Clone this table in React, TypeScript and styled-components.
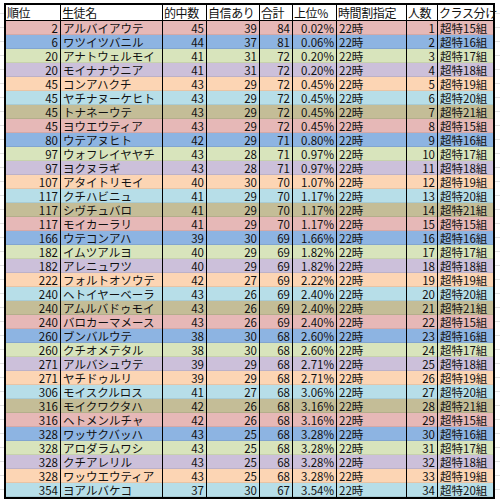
import React from 'react';
import styled, { createGlobalStyle } from 'styled-components';

const GlobalStyle = createGlobalStyle`
  html, body {
    margin: 0;
    padding: 0;
    background-color: #ffffff;
    background-image: repeating-linear-gradient(
      to bottom,
      transparent 0,
      transparent 13px,
      #e2e2e2 13px,
      #e2e2e2 14px
    );
  }
  * { box-sizing: border-box; }
`;

const CLASS_COLORS: Record<string, string> = {
  '15': '#e6b8b7',
  '16': '#8db4e2',
  '17': '#d8e4bc',
  '18': '#ccc0da',
  '19': '#fcd5b4',
  '20': '#b7dee8',
  '21': '#c4bd97',
};

const COLUMNS = '55px 102px 44px 53px 33px 44px 70px 31px 55px';

const Sheet = styled.div`
  padding: 3px 0 0 4px;
  width: 500px;
  height: 500px;
  overflow: hidden;
`;

const Table = styled.div`
  width: 491px;
  border: 2px solid #000;
  background: #fff;
  font-family: 'Noto Sans CJK JP', 'Noto Sans', sans-serif;
  font-size: 11.5px;
  color: #111;
`;

const HeaderRow = styled.div`
  display: grid;
  grid-template-columns: ${COLUMNS};
  height: 16px;
  border-bottom: 1px solid #000;
  background: #fff;
`;

const Row = styled.div<{ $bg: string }>`
  display: grid;
  grid-template-columns: ${COLUMNS};
  height: 14px;
  background: ${(p) => p.$bg};
  box-shadow: inset 0 -1px 0 rgba(0, 0, 0, 0.08);
`;

const Cell = styled.div<{ $align?: 'left' | 'right' }>`
  line-height: 14px;
  padding: 0 2px;
  text-align: ${(p) => p.$align ?? 'left'};
  white-space: nowrap;
  border-right: 1px solid #000;
  &:last-child {
    border-right: none;
  }
`;

const HeadCell = styled(Cell)`
  line-height: 15px;
  font-size: 12px;
  letter-spacing: -0.4px;
  padding-left: 1px;
`;

type Entry = [number, string, number, number, string, string];

const rows: Entry[] = [
  [2, 'アルバイアウテ', 45, 39, '0.02%', '15'],
  [6, 'ワツイツバニル', 44, 37, '0.06%', '16'],
  [20, 'アナトウェルモイ', 41, 31, '0.20%', '17'],
  [20, 'モイナナウニア', 41, 31, '0.20%', '18'],
  [45, 'コンアハクチ', 43, 29, '0.45%', '19'],
  [45, 'ヤチナヌーケヒト', 43, 29, '0.45%', '20'],
  [45, 'トナネーウテ', 43, 29, '0.45%', '21'],
  [45, 'ヨウエウティア', 43, 29, '0.45%', '15'],
  [80, 'ウテアヌヒト', 42, 29, '0.80%', '16'],
  [97, 'ウォフレイヤヤチ', 43, 28, '0.97%', '17'],
  [97, 'ヨクヌラギ', 43, 28, '0.97%', '18'],
  [107, 'アタイトリモイ', 40, 30, '1.07%', '19'],
  [117, 'クチハビニュ', 41, 29, '1.17%', '20'],
  [117, 'シヴチュバロ', 41, 29, '1.17%', '21'],
  [117, 'モイカーラリ', 41, 29, '1.17%', '15'],
  [166, 'ウテコンアハ', 39, 30, '1.66%', '16'],
  [182, 'イムツアルヨ', 40, 29, '1.82%', '17'],
  [182, 'アレニュワツ', 40, 29, '1.82%', '18'],
  [222, 'フォルトオソウテ', 42, 27, '2.22%', '19'],
  [240, 'ヘトイヤーベーラ', 43, 26, '2.40%', '20'],
  [240, 'アムルバドゥモイ', 43, 26, '2.40%', '21'],
  [240, 'バロカーマメース', 43, 26, '2.40%', '15'],
  [260, 'ブンバルウテ', 38, 30, '2.60%', '16'],
  [260, 'クチオメテタル', 38, 30, '2.60%', '17'],
  [271, 'アルバシュウテ', 39, 29, '2.71%', '18'],
  [271, 'ヤチドゥルリ', 39, 29, '2.71%', '19'],
  [306, 'モイスクルロス', 41, 27, '3.06%', '20'],
  [316, 'モイクワクタハ', 42, 26, '3.16%', '21'],
  [316, 'ヘトメンルチャ', 42, 26, '3.16%', '15'],
  [328, 'ワッサクバッハ', 43, 25, '3.28%', '16'],
  [328, 'アロダラムワシ', 43, 25, '3.28%', '17'],
  [328, 'クチアレリル', 43, 25, '3.28%', '18'],
  [328, 'ワッウエウティア', 43, 25, '3.28%', '19'],
  [354, 'ヨアルバケコ', 37, 30, '3.54%', '20'],
];

const headers = ['順位', '生徒名', '的中数', '自信あり', '合計', '上位%', '時間割指定', '人数', 'クラス分け'];

export default function App() {
  return (
    <>
      <GlobalStyle />
      <Sheet>
        <Table>
          <HeaderRow>
            {headers.map((h) => (
              <HeadCell key={h}>{h}</HeadCell>
            ))}
          </HeaderRow>
          {rows.map(([rank, name, hit, conf, pct, cls], i) => (
            <Row key={i} $bg={CLASS_COLORS[cls]}>
              <Cell $align='right'>{rank}</Cell>
              <Cell>{name}</Cell>
              <Cell $align='right'>{hit}</Cell>
              <Cell $align='right'>{conf}</Cell>
              <Cell $align='right'>{hit + conf}</Cell>
              <Cell $align='right'>{pct}</Cell>
              <Cell>22時</Cell>
              <Cell $align='right'>{i + 1}</Cell>
              <Cell>超特{cls}組</Cell>
            </Row>
          ))}
        </Table>
      </Sheet>
    </>
  );
}
